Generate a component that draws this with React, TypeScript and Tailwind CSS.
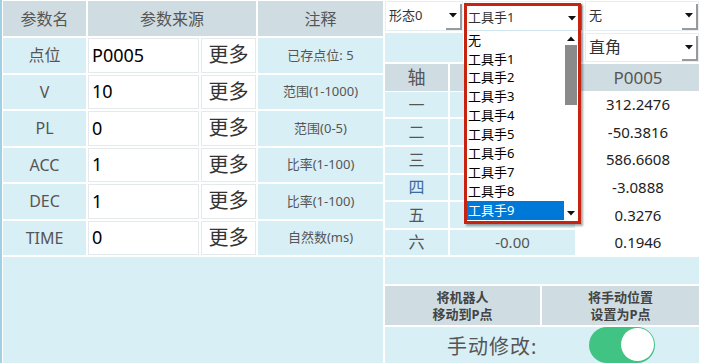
import { ReactNode } from 'react'

const LEFT_ROWS = [
  { name: '点位', value: 'P0005', note: '已存点位: 5' },
  { name: 'V', value: '10', note: '范围(1-1000)' },
  { name: 'PL', value: '0', note: '范围(0-5)' },
  { name: 'ACC', value: '1', note: '比率(1-100)' },
  { name: 'DEC', value: '1', note: '比率(1-100)' },
  { name: 'TIME', value: '0', note: '自然数(ms)' },
]

// current values of rows 一..五 sit under the open dropdown
const AXES = [
  { axis: '一', cur: '', p: '312.2476' },
  { axis: '二', cur: '', p: '-50.3816' },
  { axis: '三', cur: '', p: '586.6608' },
  { axis: '四', cur: '', p: '-3.0888' },
  { axis: '五', cur: '', p: '0.3276' },
  { axis: '六', cur: '-0.00', p: '0.1946' },
]

const TOOLS = ['无', '工具手1', '工具手2', '工具手3', '工具手4', '工具手5', '工具手6', '工具手7', '工具手8', '工具手9']

function Arrow({ className = '' }: { className?: string }) {
  return (
    <svg width="8" height="5" viewBox="0 0 8 5" className={className}>
      <path d="M0 0 L8 0 L4 4.5 Z" fill="#111" />
    </svg>
  )
}

function Select({ text, big }: { text: string; big?: boolean }) {
  return (
    <div className="bg-white flex items-stretch border border-[#e6eef1]">
      <span className={`flex-1 flex items-center pl-[3px] text-[#333] ${big ? 'text-[16px]' : 'text-[13px]'}`}>
        {text}
      </span>
      <span className="w-[16px] flex items-center justify-center border-r-2 border-b-2 border-[#9a9a9a] mt-[2px]">
        <Arrow />
      </span>
    </div>
  )
}

function Cell({ children, className = '' }: { children?: ReactNode; className?: string }) {
  return <div className={`flex items-center justify-center ${className}`}>{children}</div>
}

export default function App() {
  return (
    <div className="w-[701px] h-[363px] bg-white flex overflow-hidden relative font-['Noto_Sans','Noto_Sans_CJK_SC',sans-serif]">
      <div className="w-[2px] bg-[#9fd0e3] flex-shrink-0" />
      <div className="w-[1px] flex-shrink-0" />

      {/* Parameter table */}
      <div className="w-[380px] flex-shrink-0 flex flex-col gap-[2px] pt-[1px]">
        <div className="grid grid-cols-[83px_168px_125px] gap-[2px] h-[35px] text-[16px] text-[#555]">
          <Cell className="bg-[#cfdde2]">参数名</Cell>
          <Cell className="bg-[#cfdde2]">参数来源</Cell>
          <Cell className="bg-[#cfdde2]">注释</Cell>
        </div>
        {LEFT_ROWS.map((r) => (
          <div key={r.name} className="grid grid-cols-[83px_111px_55px_125px] gap-[2px] h-[34.5px]">
            <Cell className="bg-[#d9eff6] text-[16px] text-[#555]">{r.name}</Cell>
            <div className="bg-white border border-[#e4e9eb] flex items-center pl-[3px] text-[18px] text-black">
              {r.value}
            </div>
            <Cell className="bg-white border border-[#e4e9eb] text-[20px] text-[#333]">更多</Cell>
            <Cell className="bg-[#d9eff6] text-[13px] text-[#555]">{r.note}</Cell>
          </div>
        ))}
        <div className="flex-1 bg-[#d9eff6]" />
      </div>

      <div className="w-[2px] flex-shrink-0" />

      {/* Position panel */}
      <div className="w-[314px] flex-shrink-0 flex flex-col gap-[2px] pt-[1px]">
        <div className="grid grid-cols-[78px_118px_114px] gap-[2px] h-[30px]">
          <Select text="形态0" />
          <Select text="" />
          <Select text="无" />
        </div>
        <div className="grid grid-cols-[78px_118px_114px] gap-[2px] h-[29px]">
          <div className="bg-[#d9eff6]" />
          <div className="bg-[#d9eff6]" />
          <Select text="直角" big />
        </div>
        <div className="grid grid-cols-[63px_125px_122px] gap-[2px] h-[26px] text-[#555]">
          <Cell className="bg-[#cfdde2] text-[18px]">轴</Cell>
          <Cell className="bg-[#cfdde2] text-[17px]" />
          <Cell className="bg-[#cfdde2] text-[17px]">P0005</Cell>
        </div>
        {AXES.map((a) => (
          <div key={a.axis} className="grid grid-cols-[63px_125px_122px] gap-[2px] h-[25.7px] text-[15px]">
            <Cell className={`bg-[#d9eff6] text-[16px] ${a.axis === '四' ? 'text-[#3f6a9c]' : 'text-[#555]'}`}>{a.axis}</Cell>
            <Cell className="bg-[#d9eff6] text-[#555]">{a.cur}</Cell>
            <Cell className="bg-white text-[#222]">{a.p}</Cell>
          </div>
        ))}
        <div className="h-[27px] bg-[#d9eff6]" />
        <div className="grid grid-cols-[155px_157px] gap-[2px] h-[39px] text-[13px] font-bold text-[#444] leading-[17px]">
          <Cell className="bg-[#cfdde2] flex-col">
            <span>将机器人</span>
            <span>移动到P点</span>
          </Cell>
          <Cell className="bg-[#cfdde2] flex-col">
            <span>将手动位置</span>
            <span>设置为P点</span>
          </Cell>
        </div>
        <div className="flex-1 bg-[#d9eff6] flex items-start">
          <span className="w-[204px] pl-[62px] mt-[5px] text-[20px] text-[#555] tracking-[1px]">手动修改:</span>
          <div className="w-[66px] h-[36px] rounded-full bg-[#41c383] flex items-center justify-end pr-[1px]">
            <div className="w-[33px] h-[33px] rounded-full bg-white" />
          </div>
        </div>
      </div>

      {/* Open tool dropdown */}
      <div className="absolute left-[464px] top-[3px] w-[117px] h-[221px] border-[3px] border-[#c62410] bg-white shadow-[2px_2px_2px_rgba(0,0,0,0.35)] flex flex-col">
        <div className="h-[25px] flex items-center justify-between pl-[1px] pr-[2px] text-[13px] text-[#333] border-b border-[#cfe6ef]">
          <span>工具手1</span>
          <Arrow />
        </div>
        <div className="flex-1 flex">
          <div className="flex-1 flex flex-col">
            {TOOLS.map((t) => (
              <div
                key={t}
                className={`h-[18.9px] flex items-center pl-[1px] text-[13px] ${t === '工具手9' ? 'bg-[#0078d7] text-white' : 'text-black'}`}
              >
                {t}
              </div>
            ))}
          </div>
          <div className="w-[14px] flex flex-col items-center">
            <div className="h-[14px] flex items-center justify-center">
              <Arrow className="rotate-180" />
            </div>
            <div className="w-[12px] h-[60px] bg-[#8a8a8a]" />
            <div className="flex-1" />
            <div className="h-[16px] flex items-center justify-center">
              <Arrow />
            </div>
          </div>
        </div>
      </div>
    </div>
  )
}
